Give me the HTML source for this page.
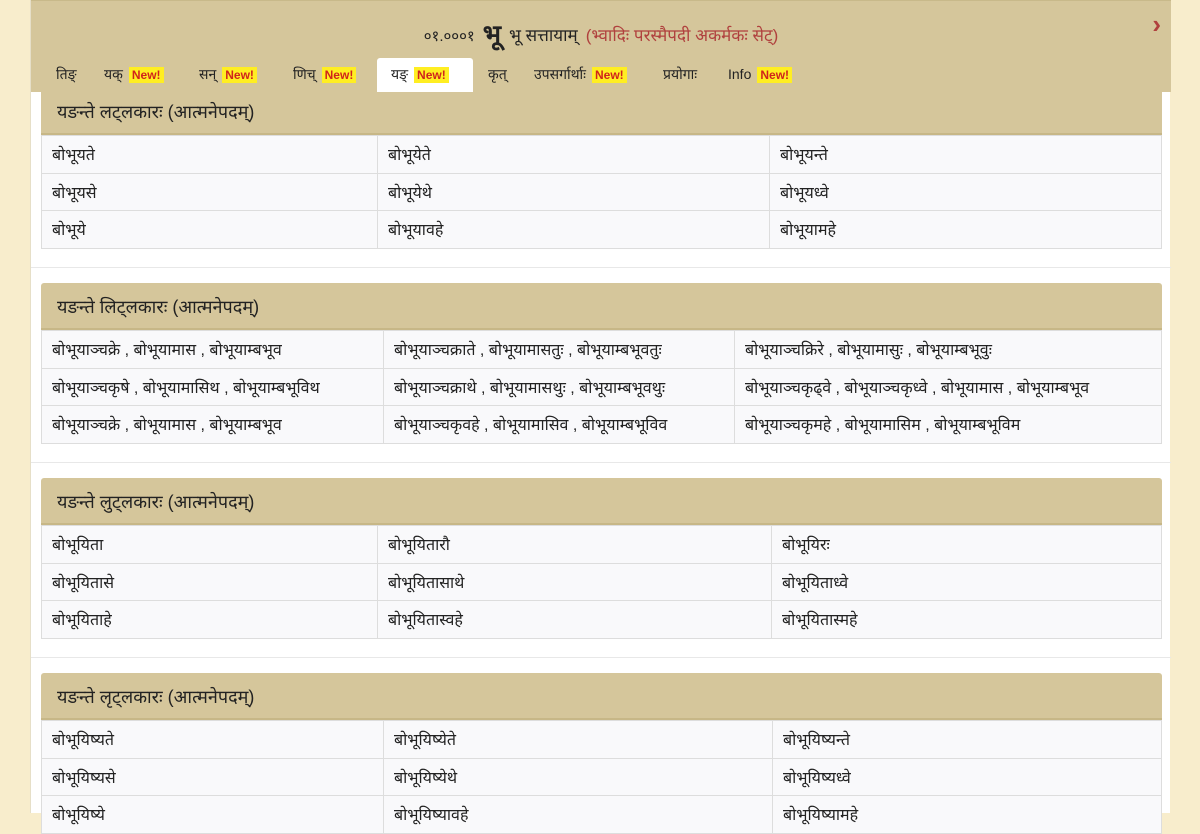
<!DOCTYPE html>
<html><head><meta charset="utf-8"><style>
*{box-sizing:border-box;margin:0;padding:0}
body{width:1200px;height:813px;overflow:hidden;background:#f8edcc;font-family:"Liberation Sans",sans-serif;color:#222;position:relative}
.panel{position:absolute;left:30px;top:0;width:1140px;height:813px;background:#fff;border-left:1px solid #e6dfc8}
.top{position:absolute;left:0;top:0;width:1140px;height:92px;background:#d5c69b;border-top:1px solid #c8b98a}
.title{position:absolute;top:14px;left:0;width:1140px;text-align:center;font-size:17px}
.title .n{font-size:15px}.title b{font-size:26px;margin:0 8px;vertical-align:-2px}
.title .r{color:#b0413e;margin-left:8px}
.arrow{position:absolute;right:10px;top:8px;color:#b0413e;font-size:26px;font-weight:bold}
.tabs{position:absolute;top:57px;left:10px;height:35px;font-size:14px}
.tab{position:absolute;top:0;height:35px;line-height:33px;white-space:nowrap}
.tab.act{background:#fff;border-radius:3px 3px 0 0}
.new{background:#ffee22;color:#d0241c;font-weight:bold;font-size:12px;padding:1px 3px;margin-left:6px}
.sec{position:absolute;left:10px;width:1121px}
.hd{height:47px;background:#d5c69b;border-bottom:2px solid #c7b787;border-radius:3px 3px 0 0;font-size:18px;padding:12px 0 0 16px}
table{width:100%;border-collapse:collapse;background:#f9f9fb}
td{border:1px solid #ddd;height:37.5px;padding:0 10px;font-size:16px}
.sep{position:absolute;left:0;width:1140px;border-top:1px solid #e8e8e8}
</style></head><body>
<div class="panel">
<div class="top">
<div class="title"><span class="n">०१.०००१</span><b>भू</b>भू सत्तायाम्<span class="r">(भ्वादिः परस्मैपदी अकर्मकः सेट्)</span></div>
<div class="arrow">›</div>
<div class="tabs">
<div class="tab" style="left:15px">तिङ्</div>
<div class="tab" style="left:63px">यक्<span class="new">New!</span></div>
<div class="tab" style="left:158px">सन्<span class="new">New!</span></div>
<div class="tab" style="left:252px">णिच्<span class="new">New!</span></div>
<div class="tab act" style="left:336px;width:96px;padding-left:14px">यङ्<span class="new">New!</span></div>
<div class="tab" style="left:447px">कृत्</div>
<div class="tab" style="left:493px">उपसर्गार्थाः<span class="new">New!</span></div>
<div class="tab" style="left:622px">प्रयोगाः</div>
<div class="tab" style="left:687px">Info<span class="new">New!</span></div>
</div></div>

<div class="sec" style="top:92px"><div class="hd" style="height:43px;padding-top:8px;border-radius:0">यङन्ते लट्लकारः (आत्मनेपदम्)</div>
<table><col style="width:336px"><col style="width:392px"><col>
<tr><td>बोभूयते</td><td>बोभूयेते</td><td>बोभूयन्ते</td></tr>
<tr><td>बोभूयसे</td><td>बोभूयेथे</td><td>बोभूयध्वे</td></tr>
<tr><td>बोभूये</td><td>बोभूयावहे</td><td>बोभूयामहे</td></tr></table></div>
<div class="sep" style="top:267px"></div>

<div class="sec" style="top:283px"><div class="hd">यङन्ते लिट्लकारः (आत्मनेपदम्)</div>
<table><col style="width:342px"><col style="width:351px"><col>
<tr><td>बोभूयाञ्चक्रे , बोभूयामास , बोभूयाम्बभूव</td><td>बोभूयाञ्चक्राते , बोभूयामासतुः , बोभूयाम्बभूवतुः</td><td>बोभूयाञ्चक्रिरे , बोभूयामासुः , बोभूयाम्बभूवुः</td></tr>
<tr><td>बोभूयाञ्चकृषे , बोभूयामासिथ , बोभूयाम्बभूविथ</td><td>बोभूयाञ्चक्राथे , बोभूयामासथुः , बोभूयाम्बभूवथुः</td><td>बोभूयाञ्चकृढ्वे , बोभूयाञ्चकृध्वे , बोभूयामास , बोभूयाम्बभूव</td></tr>
<tr><td>बोभूयाञ्चक्रे , बोभूयामास , बोभूयाम्बभूव</td><td>बोभूयाञ्चकृवहे , बोभूयामासिव , बोभूयाम्बभूविव</td><td>बोभूयाञ्चकृमहे , बोभूयामासिम , बोभूयाम्बभूविम</td></tr></table></div>
<div class="sep" style="top:462px"></div>

<div class="sec" style="top:478px"><div class="hd">यङन्ते लुट्लकारः (आत्मनेपदम्)</div>
<table><col style="width:336px"><col style="width:394px"><col>
<tr><td>बोभूयिता</td><td>बोभूयितारौ</td><td>बोभूयिरः</td></tr>
<tr><td>बोभूयितासे</td><td>बोभूयितासाथे</td><td>बोभूयिताध्वे</td></tr>
<tr><td>बोभूयिताहे</td><td>बोभूयितास्वहे</td><td>बोभूयितास्महे</td></tr></table></div>
<div class="sep" style="top:657px"></div>

<div class="sec" style="top:673px"><div class="hd">यङन्ते लृट्लकारः (आत्मनेपदम्)</div>
<table><col style="width:342px"><col style="width:389px"><col>
<tr><td>बोभूयिष्यते</td><td>बोभूयिष्येते</td><td>बोभूयिष्यन्ते</td></tr>
<tr><td>बोभूयिष्यसे</td><td>बोभूयिष्येथे</td><td>बोभूयिष्यध्वे</td></tr>
<tr><td>बोभूयिष्ये</td><td>बोभूयिष्यावहे</td><td>बोभूयिष्यामहे</td></tr></table></div>
</div>
</body></html>
